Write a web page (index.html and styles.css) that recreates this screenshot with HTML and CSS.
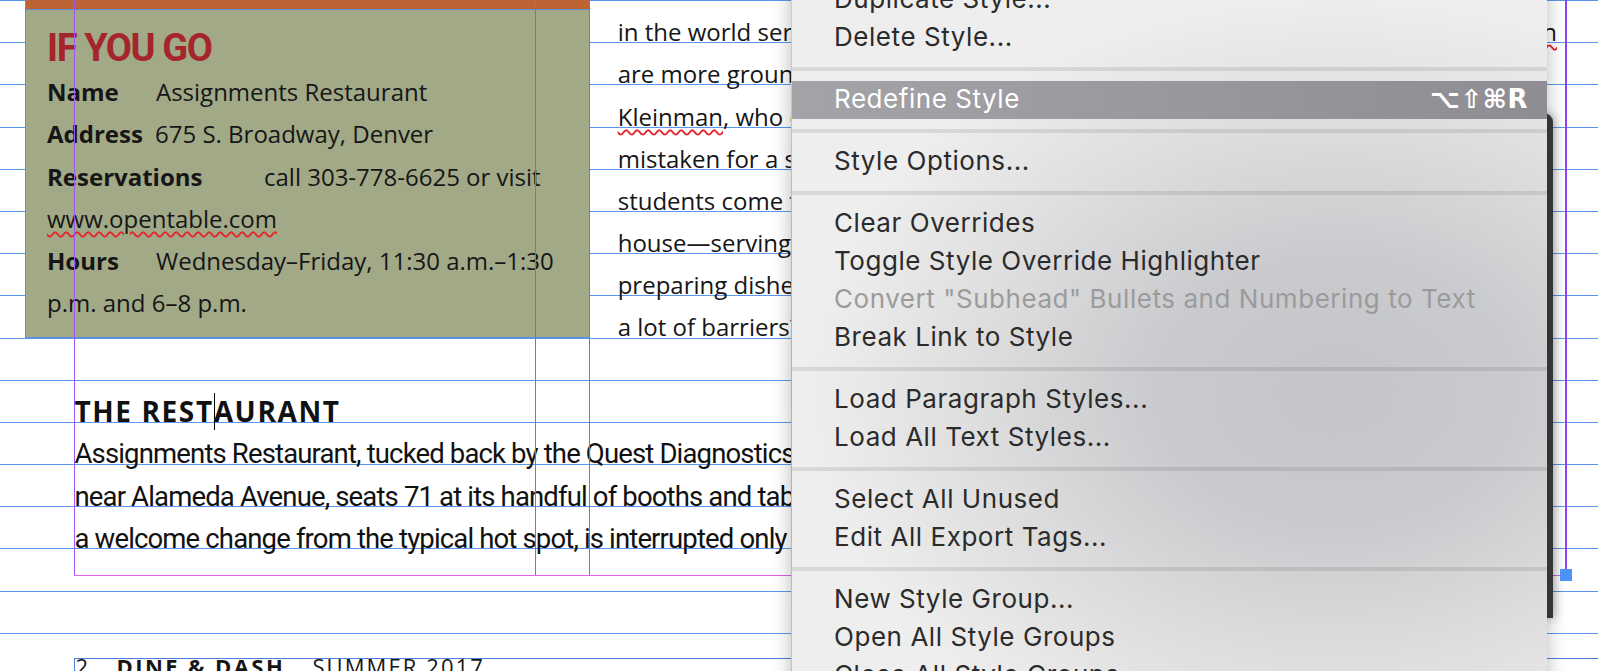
FILE: index.html
```html
<!DOCTYPE html>
<html lang="en">
<head>
    <meta charset="UTF-8">
    <title>Paragraph Styles - Dine &amp; Dash</title>
    <link rel="stylesheet" href="styles.css">
</head>
<body>
    <div class="page">
        <div class="baseline-grid">
            <div></div><div></div><div></div><div></div>
            <div></div><div></div><div></div><div></div>
            <div></div><div></div><div></div><div></div>
            <div></div><div></div><div></div><div></div>
        </div>

        <div class="spread">
            <div class="top-row">
                <div class="info-box">
                    <div class="info-bar"></div>
                    <div class="info-body">
                        <div class="info-title">IF YOU GO</div>
                        <div class="info-row"><span class="info-label">Name</span>Assignments Restaurant</div>
                        <div class="info-row"><span class="info-label label-address">Address</span>675 S. Broadway, Denver</div>
                        <div class="info-row"><span class="info-label label-wide">Reservations</span>call 303-778-6625 or visit</div>
                        <div class="info-row"><span class="spell">www.opentable.com</span></div>
                        <div class="info-row"><span class="info-label">Hours</span>Wednesday–Friday, 11:30 a.m.–1:30</div>
                        <div class="info-row">p.m. and 6–8 p.m.</div>
                    </div>
                </div>

                <div class="column-text">
                    <div class="col-line line-full"><span>in the world serves as a classroom for young chefs, and few</span><span class="spell">Raitman</span></div>
                    <div class="col-line">are more grounded in the basics than this one, says chef Jon</div>
                    <div class="col-line"><span class="spell">Kleinman</span>, who oversees the menu. The room could easily be</div>
                    <div class="col-line">mistaken for a stylish bistro downtown, yet every night</div>
                    <div class="col-line">students come together to run the front and the back of the</div>
                    <div class="col-line">house—serving guests, taking orders, plating desserts and</div>
                    <div class="col-line">preparing dishes from scratch. Are there ever any nerves or</div>
                    <div class="col-line">a lot of barriers? Not really, Kleinman says; the students</div>
                </div>
            </div>

            <div class="restaurant">
                <h2 class="restaurant-head">THE REST<span class="caret"></span>AURANT</h2>
                <div class="body-line">Assignments Restaurant, tucked back by the Quest Diagnostics building</div>
                <div class="body-line">near Alameda Avenue, seats 71 at its handful of booths and tables. The quiet,</div>
                <div class="body-line">a welcome change from the typical hot spot, is interrupted only by the</div>
            </div>

            <div class="folio">
                <span class="folio-num">2</span><span class="folio-title">DINE &amp; DASH</span><span class="folio-issue">SUMMER 2017</span>
            </div>
        </div>

        <div class="guides">
            <div class="guide-v guide-margin"></div>
            <div class="guide-v guide-col1"></div>
            <div class="guide-v guide-col2"></div>
            <div class="guide-v guide-right"></div>
            <div class="guide-h"></div>
        </div>

        <div class="panel-edge"></div>

        <div class="menu">
            <div class="menu-item">Duplicate Style...</div>
            <div class="menu-item">Delete Style...</div>
            <div class="menu-sep"></div>
            <div class="menu-item active">Redefine Style<span class="shortcut">⌥⇧⌘R</span></div>
            <div class="menu-sep"></div>
            <div class="menu-item">Style Options...</div>
            <div class="menu-sep"></div>
            <div class="menu-item">Clear Overrides</div>
            <div class="menu-item">Toggle Style Override Highlighter</div>
            <div class="menu-item disabled">Convert "Subhead" Bullets and Numbering to Text</div>
            <div class="menu-item">Break Link to Style</div>
            <div class="menu-sep"></div>
            <div class="menu-item">Load Paragraph Styles...</div>
            <div class="menu-item">Load All Text Styles...</div>
            <div class="menu-sep"></div>
            <div class="menu-item">Select All Unused</div>
            <div class="menu-item">Edit All Export Tags...</div>
            <div class="menu-sep"></div>
            <div class="menu-item">New Style Group...</div>
            <div class="menu-item">Open All Style Groups</div>
            <div class="menu-item">Close All Style Groups</div>
        </div>

        <div class="frame-handle"></div>
    </div>
</body>
</html>
```

FILE: styles.css
```css
* {
    box-sizing: border-box;
}

body {
    margin: 0;
    background: #fff;
    font-family: "Open Sans", sans-serif;
    color: #161616;
}

.page {
    position: relative;
    width: 1598px;
    height: 671px;
    overflow: hidden;
    background: #fff;
}

/* baseline grid */
.baseline-grid {
    position: absolute;
    inset: 0;
    display: flex;
    flex-direction: column;
}
.baseline-grid div {
    flex: 0 0 42.2px;
    border-top: 1px solid #5b96ee;
}

.spread {
    position: relative;
}

.top-row {
    display: flex;
    align-items: flex-start;
    height: 338px;
}

/* if you go box */
.info-box {
    flex: 0 0 564px;
    margin-left: 25px;
    height: 338px;
    background: #a2a987;
    border-left: 1px solid #5b8fdc;
    border-bottom: 1px solid #5b8fdc;
}
.info-bar {
    height: 10px;
    background: #be6333;
    border-bottom: 1px solid #5b8fdc;
}
.info-body {
    padding: 16.5px 0 0 21px;
    font-size: 24px;
    line-height: 42.3px;
    white-space: nowrap;
}
.info-title {
    font-family: Roboto, "Liberation Sans", sans-serif;
    font-weight: 700;
    font-size: 38px;
    line-height: 42px;
    letter-spacing: -1.4px;
    color: #a5252b;
    margin-bottom: 2.5px;
}
.info-label {
    display: inline-block;
    width: 109px;
    font-weight: 700;
}
.label-address {
    width: 108px;
}
.label-wide {
    width: 217px;
}

.spell {
    text-decoration: underline wavy #e4252b;
    text-decoration-thickness: 1.5px;
    text-underline-offset: 3px;
}

/* right column */
.column-text {
    width: 968px;
    padding: 11.3px 0 0 28.7px;
    font-size: 24px;
    line-height: 42.14px;
    white-space: nowrap;
}
.line-full {
    display: flex;
    justify-content: space-between;
}

/* the restaurant */
.restaurant {
    margin: 51.8px 0 0 74.5px;
    white-space: nowrap;
}
.restaurant-head {
    margin: 0 0 1.5px;
    font-size: 28px;
    font-weight: 700;
    line-height: 42.14px;
    letter-spacing: 1.6px;
    color: #111;
}
.caret {
    display: inline-block;
    width: 1px;
    height: 37px;
    margin: 0 -1px 0 0;
    background: #000;
    vertical-align: -8px;
}
.body-line {
    font-family: Roboto, "Liberation Sans", sans-serif;
    font-size: 27.5px;
    line-height: 42.15px;
    letter-spacing: -0.85px;
    color: #111;
}

/* folio */
.folio {
    margin: 97.8px 0 0 73.6px;
    border-top: 1px solid #4d7fd6;
    border-left: 1px solid #4d7fd6;
    padding-left: 1px;
    font-size: 22px;
    line-height: 14px;
    height: 40px;
    white-space: nowrap;
}
.folio-num {
    display: inline-block;
    width: 41px;
}
.folio-title {
    display: inline-block;
    width: 195.8px;
    font-weight: 700;
    letter-spacing: 2.4px;
}
.folio-issue {
    letter-spacing: 2.1px;
}

/* guides drawn on top of the page */
.guides {
    position: absolute;
    inset: 0;
}
.guide-v {
    position: absolute;
    top: 0;
    height: 575px;
    width: 1px;
    background: #9c58f4;
}
.guide-margin { left: 74px; }
.guide-col1 { left: 535px; }
.guide-col2 { left: 589px; }
.guide-right {
    left: 1565px;
    width: 2px;
    background: #8e44fb;
}
.guide-h {
    position: absolute;
    left: 74px;
    top: 575px;
    width: 1486px;
    height: 1px;
    background: #e35fe8;
}

.frame-handle {
    position: absolute;
    left: 1560px;
    top: 569px;
    width: 12px;
    height: 12px;
    background: #4b93f8;
}

/* panel peeking out behind the menu */
.panel-edge {
    position: absolute;
    left: 1450px;
    top: 113px;
    width: 103px;
    height: 505px;
    background: #3c3c3c;
    border-radius: 0 9px 0 0;
    box-shadow: 2px 0 10px rgba(0, 0, 0, 0.3);
}

/* context menu */
.menu {
    position: absolute;
    left: 791px;
    top: -19px;
    width: 756px;
    height: 720px;
    background: radial-gradient(ellipse 70% 55% at 72% 57%, #c3c5c8 0%, #cacbce 35%, #dcdcdd 65%, #eeeeee 100%);
    border-left: 1px solid rgba(0, 0, 0, 0.14);
    box-shadow: 0 0 18px rgba(0, 0, 0, 0.28);
    font-family: Inter, "DejaVu Sans", sans-serif;
    font-size: 26px;
    letter-spacing: 0.55px;
    color: #2b2b2b;
}
.menu-item {
    display: flex;
    justify-content: space-between;
    height: 38px;
    padding: 0 19px 2px 42px;
    line-height: 36px;
    white-space: nowrap;
}
.menu-item.active {
    background: linear-gradient(to right, #a4a3a8, #8e8d93);
    color: #fff;
}
.menu-item.disabled {
    color: #9b9b9b;
}
.shortcut {
    font-family: "DejaVu Sans", Inter, sans-serif;
    font-weight: 700;
    letter-spacing: 0.5px;
}
.menu-sep {
    height: 4px;
    margin: 10px 0;
    background: rgba(0, 0, 0, 0.09);
}
```
